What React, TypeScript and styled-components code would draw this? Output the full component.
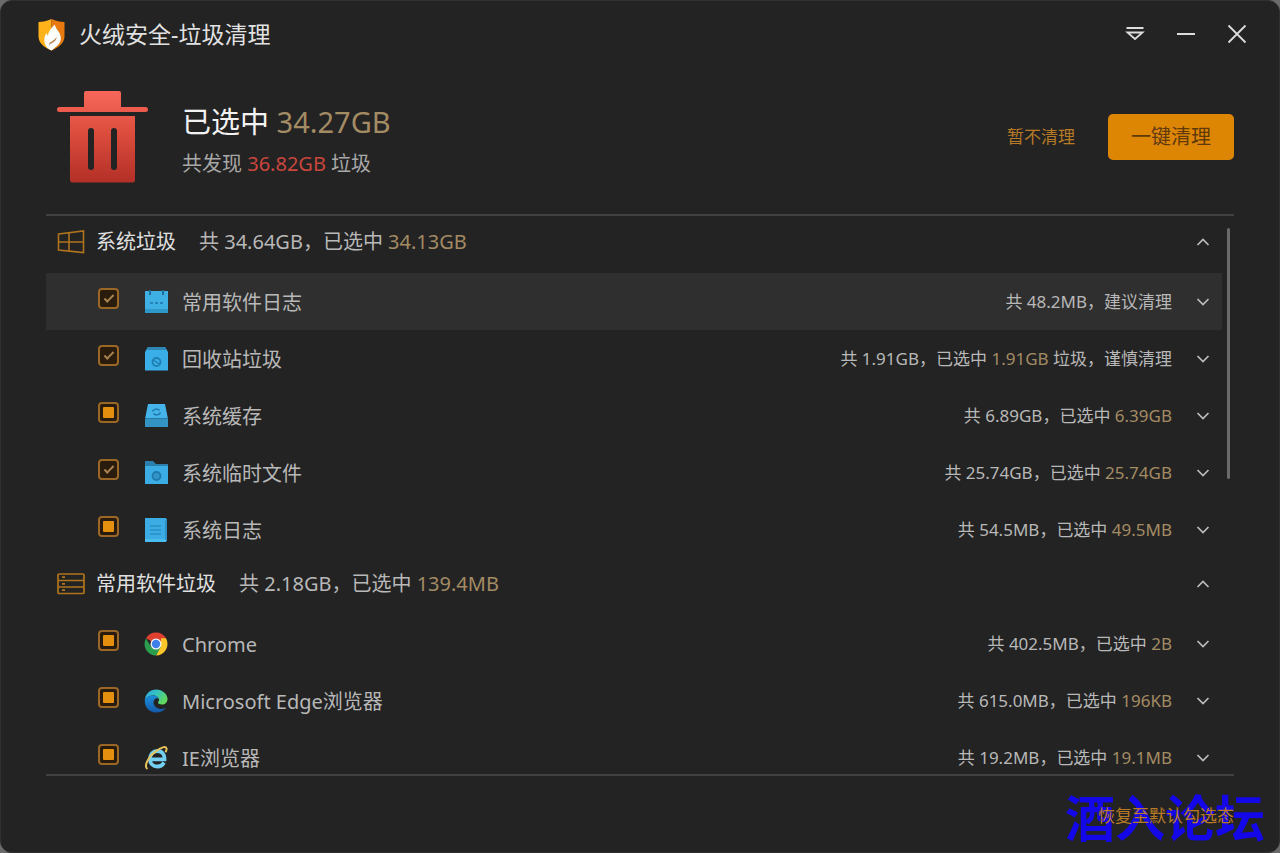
import React, { useEffect, useRef, useState } from "react";
import styled, { createGlobalStyle } from "styled-components";

const GlobalStyle = createGlobalStyle`
  *, *::before, *::after { box-sizing: border-box; }
  body {
    margin: 0;
    background: #6b6b6b;
    font-family: "Noto Sans", "Noto Sans CJK SC", sans-serif;
    color: #b8b8b8;
  }
  button, input { font: inherit; margin: 0; }
`;

const Window = styled.main`
  position: relative;
  display: flex;
  flex-direction: column;
  height: 100vh;
  min-height: 560px;
  background: #232323;
  border: 1px solid #303030;
  border-radius: 12px;
  overflow: hidden;
`;

const TitleBar = styled.header`
  display: flex;
  align-items: center;
  height: 69px;
  flex: none;
  padding: 0 31px 3px 36px;
`;

const Title = styled.h1`
  flex: 1;
  margin: 0 0 0 13px;
  font-size: 23px;
  line-height: 32px;
  font-weight: 400;
  color: #e2e2e2;
`;

const WindowControls = styled.div`
  display: flex;
  gap: 29px;
`;

const IconButton = styled.button`
  display: flex;
  align-items: center;
  justify-content: center;
  width: 22px;
  height: 22px;
  padding: 0;
  border: 0;
  background: none;
  color: #dcdcdc;
  cursor: pointer;
`;

const Summary = styled.section`
  display: flex;
  align-items: center;
  flex: none;
  height: 146px;
  margin: 0 45px;
  padding: 0 0 11px 11px;
  border-bottom: 2px solid #414141;
`;

const SummaryText = styled.div`
  flex: 1;
  margin-left: 34px;
  padding-top: 10px;
`;

const Selected = styled.p`
  margin: 0;
  font-size: 29px;
  line-height: 44px;
  color: #f2f2f2;
`;

const Found = styled.p`
  margin: 0;
  font-size: 20px;
  line-height: 40px;
  color: #a8a8a8;
`;

const Amount = styled.span<{ $tone?: "gold" | "red" }>`
  color: ${({ $tone }) => ($tone === "red" ? "#c9463c" : "#a38b63")};
`;

const TextButton = styled.button`
  padding: 0;
  border: 0;
  background: none;
  font-size: 17px;
  line-height: 24px;
  color: #b97a26;
  cursor: pointer;
`;

const PrimaryButton = styled.button`
  height: 46px;
  margin-left: 33px;
  padding: 0 23px;
  border: 0;
  border-radius: 5px;
  background: #dd8604;
  font-size: 20px;
  line-height: 28px;
  color: #5f3a08;
  cursor: pointer;
`;

const ListArea = styled.section`
  display: flex;
  flex: 1;
  min-height: 0;
  margin: 0 45px;
  border-bottom: 2px solid #414141;
`;

const List = styled.div`
  flex: 1;
  min-width: 0;
  overflow: hidden;
`;

const ScrollTrack = styled.div`
  width: 12px;
  padding: 12px 4px 0 5px;
`;

const ScrollThumb = styled.div`
  height: 46%;
  border-radius: 2px;
  background: #6a6a6a;
`;

const GroupHeader = styled.div`
  display: flex;
  align-items: center;
  height: 57px;
  padding: 0 8px 5px 11px;
`;

const GroupTitle = styled.h2`
  margin: 0 23px 0 11px;
  font-size: 20px;
  line-height: 28px;
  font-weight: 400;
  color: #e0e0e0;
`;

const GroupInfo = styled.p`
  flex: 1;
  margin: 0;
  font-size: 20px;
  line-height: 28px;
`;

const Items = styled.ul`
  margin: 0;
  padding: 0;
  list-style: none;
`;

const Row = styled.li<{ $active?: boolean }>`
  display: flex;
  align-items: center;
  height: 57px;
  padding: 0 8px 0 52px;
  background: ${({ $active }) => ($active ? "#2f2f2f" : "transparent")};
`;

const RowLabel = styled.label`
  display: flex;
  align-items: center;
  flex: 1;
  font-size: 20px;
  line-height: 28px;
  cursor: pointer;
`;

const RowName = styled.span`
  padding-top: 3px;
`;

const RowIcon = styled.span`
  display: flex;
  margin: 0 14px 0 25px;
`;

const RowInfo = styled.span`
  margin-right: 20px;
  font-size: 17px;
  line-height: 24px;
`;

const Box = styled.input`
  appearance: none;
  display: grid;
  place-items: center;
  flex: none;
  width: 21px;
  height: 21px;
  margin-bottom: 6px;
  border: 2px solid #9a6726;
  border-radius: 4px;
  background: #2a1c0c;
  cursor: pointer;

  &:checked::after {
    content: "";
    width: 10px;
    height: 5px;
    margin-bottom: 3px;
    border: solid #a8834f;
    border-width: 0 0 2px 2px;
    transform: rotate(-45deg);
  }

  &:indeterminate::after {
    content: "";
    width: 11px;
    height: 11px;
    border-radius: 1px;
    background: #e58f0e;
  }
`;

const Footer = styled.footer`
  position: relative;
  display: flex;
  align-items: center;
  justify-content: flex-end;
  flex: none;
  height: 76px;
  padding: 3px 45px 0;
`;

const Watermark = styled.span`
  position: absolute;
  right: 14px;
  bottom: 6px;
  font-size: 50px;
  line-height: 56px;
  font-weight: 700;
  color: #1408e8;
  pointer-events: none;
`;

const ResetButton = styled(TextButton)`
  position: relative;
`;

type State = "checked" | "partial";

function Checkbox({ id, state }: { id: string; state: State }) {
  const ref = useRef<HTMLInputElement>(null);
  const [value, setValue] = useState<State | "off">(state);
  useEffect(() => {
    if (ref.current) ref.current.indeterminate = value === "partial";
  }, [value]);
  return (
    <Box
      ref={ref}
      id={id}
      type="checkbox"
      checked={value === "checked"}
      onChange={(e) => setValue(e.target.checked ? "checked" : "off")}
    />
  );
}

function Chevron({ up }: { up?: boolean }) {
  return (
    <svg width="14" height="10" viewBox="0 0 14 10" fill="none" stroke="#bdbdbd" strokeWidth="1.7">
      <path d={up ? "M1.5 8 7 2.5 12.5 8" : "M1.5 2 7 7.5 12.5 2"} />
    </svg>
  );
}

function Logo() {
  return (
    <svg width="29" height="33" viewBox="0 0 29 33">
      <path d="M14.5 1C10 3 6 4 1.500 4v14c0 7 5 11 13 14.500z" fill="#ffb21a" />
      <path d="M14.500 1C19 3 23 4 27.500 4v14c0 7-5 11-13 14.500z" fill="#e8790e" />
      <path d="M18 6.500c.3 4 3.500 6 5 9.500 1.500 4 1 8-1.500 10.500-2 2-4.500 4-7 6-3.500-1.500-6.500-4.500-7-8.500-.5-3.500 0-6.500 2-9 .3 1.500.8 2 1.500 2.500C11.500 13 14 10 18 6.500z" fill="#fff" />
      <path d="M12 27c-.3-3.500 5.500-4 7.500-8 .3 4-3.500 5.500-7.500 8z" fill="#b98a5c" />
    </svg>
  );
}

function TrashIcon() {
  return (
    <svg width="91" height="92" viewBox="0 0 91 92">
      <defs>
        <linearGradient id="trash" gradientUnits="userSpaceOnUse" x1="0" y1="0" x2="0" y2="92">
          <stop offset="0" stopColor="#f8685a" />
          <stop offset=".5" stopColor="#d94a3b" />
          <stop offset="1" stopColor="#b22f27" />
        </linearGradient>
      </defs>
      <g fill="url(#trash)">
        <path d="M29 0h33q2 0 2 2v14h24.500a2.500 2.500 0 0 1 0 5h-86a2.500 2.500 0 0 1 0-5H27V2q0-2 2-2z" />
        <path
          fillRule="evenodd"
          d="M13 25h65v64q0 2.500-2.500 2.500h-60Q13 91.500 13 89zM31 40v36a3 3 0 0 0 6 0V40a3 3 0 0 0-6 0zM54 40v36a3 3 0 0 0 6 0V40a3 3 0 0 0-6 0z"
        />
      </g>
    </svg>
  );
}

function WindowsIcon() {
  return (
    <svg width="28" height="24" viewBox="0 0 28 24" fill="none" stroke="#b0741d" strokeWidth="1.600">
      <path d="M1.500 4 26.500 1v21.500L1.500 20zM12 2.800v18.400M1.500 12h25" />
    </svg>
  );
}

function ServerIcon() {
  return (
    <svg width="28" height="24" viewBox="0 0 28 24" fill="none" stroke="#b0741d" strokeWidth="1.700">
      <rect x="1" y="2" width="26" height="19.500" rx="1" />
      <path d="M1 8.500h26M1 15h26M5 5.200h3M5 11.800h3M5 18.200h3" />
    </svg>
  );
}

type Art = "calendar" | "recycle" | "cache" | "folder" | "log" | "chrome" | "edge" | "ie";

function ItemIcon({ art }: { art: Art }) {
  return (
    <svg width="24" height="24" viewBox="0 0 24 24">
      {art === "calendar" && (
        <>
          <path d="M1 1h23v22H1z" fill="#3fb0e4" />
          <path d="M1 19h23v4H1z" fill="#2f98cb" />
          <path d="M6 0v5M19 0v5" stroke="#1f6d9a" strokeWidth="2" />
          <path d="M6 13h3M11 13h3M16 13h3" stroke="#2583b5" strokeWidth="2" />
        </>
      )}
      {art === "recycle" && (
        <>
          <path d="M4 0h17l3 5v18.500H1V5z" fill="#3aaee6" />
          <path d="M4 0h17l2 3H2z" fill="#2d86b3" />
          <circle cx="12.500" cy="15" r="4" fill="none" stroke="#1f7fb2" strokeWidth="1.800" />
          <path d="m9.500 13 5.500 4" stroke="#1f7fb2" strokeWidth="1.500" />
        </>
      )}
      {art === "cache" && (
        <>
          <path d="M4 0h17l3 15H1z" fill="#45b4ea" />
          <path d="M1 14h23v9H1z" fill="#3394c4" />
          <path d="M1 14.500h23" stroke="#2878a4" />
          <path d="M8.500 7.500a4 3.500 0 0 1 7-1M16.500 8.500a4 3.500 0 0 1-7 1" fill="none" stroke="#2179aa" strokeWidth="1.500" />
        </>
      )}
      {art === "folder" && (
        <>
          <path d="M1 0h8l3 3h12v6H1z" fill="#2b7fac" />
          <path d="M1 5h23v18H1z" fill="#3bade4" />
          <circle cx="12.500" cy="15" r="4" fill="#3294c8" stroke="#2079ac" strokeWidth="1.800" />
        </>
      )}
      {art === "log" && (
        <>
          <path d="M1 0h20q2 0 2 2v20q0 1-1 1H1z" fill="#3bade4" />
          <path d="M1 21h22l-1 3H1z" fill="#49bdf0" />
          <path d="M6 8h11M6 12h11M6 16h11" stroke="#2b8fc2" strokeWidth="1.400" />
          <path d="M22 2v20" stroke="#2c88b8" strokeWidth="1.500" />
        </>
      )}
      {art === "chrome" && (
        <>
          <path d="M12 12 2 6.300A11.500 11.500 0 0 1 22 6.300z" fill="#e0402f" />
          <path d="M22 6.300A11.500 11.500 0 0 1 12 23.500L17 12V6.300z" fill="#fbc62a" />
          <path d="M2 6.300A11.500 11.500 0 0 0 12 23.500L17 14.800H12L7 14.800z" fill="#2a9d4e" />
          <circle cx="12" cy="12" r="5.500" fill="#f4f4f4" />
          <circle cx="12" cy="12" r="4.200" fill="#3f7fe8" />
        </>
      )}
      {art === "edge" && (
        <>
          <defs>
            <linearGradient id="edgeTop" x1="0" y1="0" x2="1" y2=".5">
              <stop offset="0" stopColor="#2fa4e6" />
              <stop offset=".5" stopColor="#34c2c0" />
              <stop offset="1" stopColor="#62d85c" />
            </linearGradient>
            <linearGradient id="edgeLow" x1="0" y1="0" x2="0" y2="1">
              <stop offset="0" stopColor="#1c8fdc" />
              <stop offset="1" stopColor="#1459a8" />
            </linearGradient>
          </defs>
          <path d="M.8 11C1.500 4.500 6.500.5 12 .5c6.500 0 11.500 4.500 11.500 9.500 0 3.500-2.500 5.500-5.500 5.500-2.500 0-4-1-4-2 0-.7 1-1 1-2.700C15 8.500 12.500 6.500 9.500 6.500 5.500 6.500 2 8.500.8 11z" fill="url(#edgeTop)" />
          <path d="M.8 11C2 8 5.500 6.500 9.500 6.500c2.500 0 4.500 1.300 5.200 2.800C11 8.500 9.500 11 9.500 13.500c0 4 4 6.500 8 6.500 1.500 0 3-.5 4.500-1.500-2 3.200-5.500 5-10 5C5.500 23.500.3 18.500.8 11z" fill="url(#edgeLow)" />
        </>
      )}
      {art === "ie" && (
        <>
          <path d="M20 16.500C18.500 19.300 16.500 20.500 13.500 20.500c-4.500 0-7.500-3-7.500-7.500s3-8 7.500-8 7.300 3.500 7 8.300H7" fill="none" stroke="#74d0f0" strokeWidth="3.800" />
          <path d="M3.500 23C-.5 20.500 4 11 11.500 5.500 17 1.500 22-.5 22.500 2.500c.2 1.200-.3 2.500-1 3.800" fill="none" stroke="#e8c35c" strokeWidth="2" />
        </>
      )}
    </svg>
  );
}

type Item = {
  name: string;
  art: Art;
  state: State;
  total: string;
  picked?: string;
  tail?: string;
  active?: boolean;
};

const groups: { title: string; icon: React.ReactNode; total: string; picked: string; items: Item[] }[] = [
  {
    title: "系统垃圾",
    icon: <WindowsIcon />,
    total: "34.64GB",
    picked: "34.13GB",
    items: [
      { name: "常用软件日志", art: "calendar", state: "checked", total: "48.2MB", tail: "建议清理", active: true },
      { name: "回收站垃圾", art: "recycle", state: "checked", total: "1.91GB", picked: "1.91GB", tail: " 垃圾，谨慎清理" },
      { name: "系统缓存", art: "cache", state: "partial", total: "6.89GB", picked: "6.39GB" },
      { name: "系统临时文件", art: "folder", state: "checked", total: "25.74GB", picked: "25.74GB" },
      { name: "系统日志", art: "log", state: "partial", total: "54.5MB", picked: "49.5MB" },
    ],
  },
  {
    title: "常用软件垃圾",
    icon: <ServerIcon />,
    total: "2.18GB",
    picked: "139.4MB",
    items: [
      { name: "Chrome", art: "chrome", state: "partial", total: "402.5MB", picked: "2B" },
      { name: "Microsoft Edge浏览器", art: "edge", state: "partial", total: "615.0MB", picked: "196KB" },
      { name: "IE浏览器", art: "ie", state: "partial", total: "19.2MB", picked: "19.1MB" },
    ],
  },
];

export default function App() {
  return (
    <>
      <GlobalStyle />
      <Window>
        <TitleBar>
          <Logo />
          <Title>火绒安全-垃圾清理</Title>
          <WindowControls>
            <IconButton aria-label="菜单">
              <svg width="20" height="16" viewBox="0 0 20 16" fill="none" stroke="currentColor" strokeWidth="1.800">
                <path d="M1.500 2h17M2.500 6.500h15L10 13z" />
              </svg>
            </IconButton>
            <IconButton aria-label="最小化">
              <svg width="18" height="18" viewBox="0 0 18 18" stroke="currentColor" strokeWidth="2">
                <path d="M0 9h18" />
              </svg>
            </IconButton>
            <IconButton aria-label="关闭">
              <svg width="20" height="20" viewBox="0 0 20 20" stroke="currentColor" strokeWidth="1.800">
                <path d="m1.500 1.500 17 17M18.500 1.500l-17 17" />
              </svg>
            </IconButton>
          </WindowControls>
        </TitleBar>

        <Summary>
          <TrashIcon />
          <SummaryText>
            <Selected>
              已选中 <Amount>34.27GB</Amount>
            </Selected>
            <Found>
              共发现 <Amount $tone="red">36.82GB</Amount> 垃圾
            </Found>
          </SummaryText>
          <TextButton>暂不清理</TextButton>
          <PrimaryButton>一键清理</PrimaryButton>
        </Summary>

        <ListArea>
          <List>
            {groups.map((group, g) => (
              <section key={group.title}>
                <GroupHeader>
                  {group.icon}
                  <GroupTitle>{group.title}</GroupTitle>
                  <GroupInfo>
                    共 {group.total}，已选中 <Amount>{group.picked}</Amount>
                  </GroupInfo>
                  <IconButton aria-label="收起">
                    <Chevron up />
                  </IconButton>
                </GroupHeader>
                <Items>
                  {group.items.map((item, i) => (
                    <Row key={item.name} $active={item.active}>
                      <Checkbox id={`item-${g}-${i}`} state={item.state} />
                      <RowLabel htmlFor={`item-${g}-${i}`}>
                        <RowIcon>
                          <ItemIcon art={item.art} />
                        </RowIcon>
                        <RowName>{item.name}</RowName>
                      </RowLabel>
                      <RowInfo>
                        共 {item.total}，
                        {item.picked && (
                          <>
                            已选中 <Amount>{item.picked}</Amount>
                          </>
                        )}
                        {item.tail}
                      </RowInfo>
                      <IconButton aria-label="展开">
                        <Chevron />
                      </IconButton>
                    </Row>
                  ))}
                </Items>
              </section>
            ))}
          </List>
          <ScrollTrack>
            <ScrollThumb />
          </ScrollTrack>
        </ListArea>

        <Footer>
          <Watermark>酒入论坛</Watermark>
          <ResetButton>恢复至默认勾选态</ResetButton>
        </Footer>
      </Window>
    </>
  );
}
